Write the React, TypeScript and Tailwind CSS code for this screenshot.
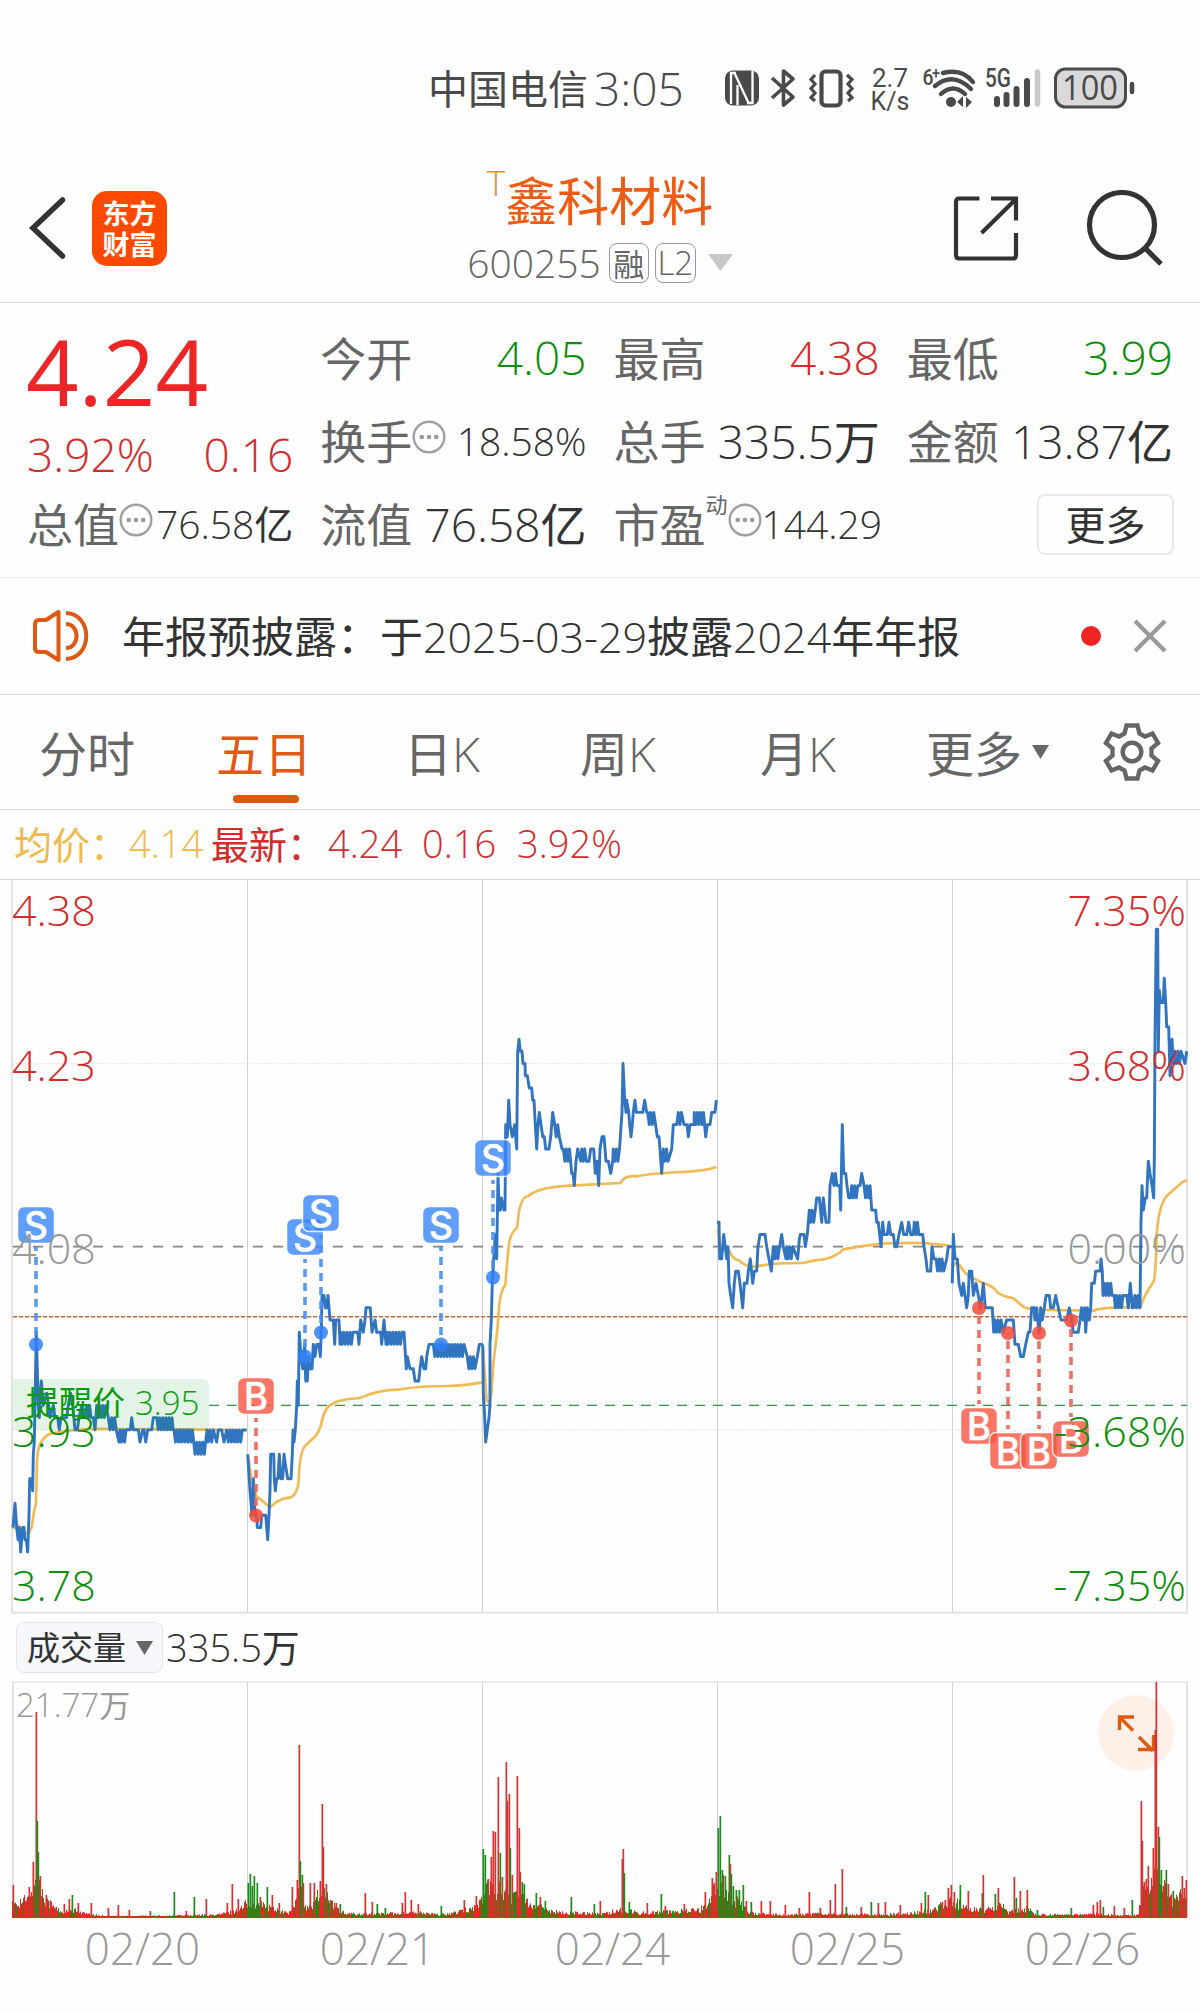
import React from "react";

const RED = "#d42c2c";
const GREEN = "#0d8f0d";

/* ---------- price series ---------- */

// [x, price] is a vertex, [x1, x2, a, b] a fast oscillation between two prices.
type Seg = [number, number] | [number, number, number, number];

const priceY = (p: number) => 366.7 - (p - 408) * 12.21;

function toPath(segs: Seg[], ox: number) {
  const pts: string[] = [];
  const push = (x: number, p: number) => pts.push(`${(ox + x / 3).toFixed(1)},${priceY(p).toFixed(1)}`);
  segs.forEach((s) => {
    if (s.length === 2) {
      push(s[0], s[1]);
      return;
    }
    let up = true;
    for (let x = s[0]; x <= s[1]; x += 4.6) {
      push(x, up ? s[2] : s[3]);
      up = !up;
    }
  });
  return "M" + pts.join("L");
}

const day1: Seg[] = [[39,385],[45,387],[50,385],[54,384],[58,385],[62,383],[68,385],[72,385],[75,384],[79,384],[83,383],[87,386],[89,389],[96,389],[98,388],[100,391],[103,392],[109,401],[115,395],[118,394],[121,396],[124,397],[127,396],[130,395],[140,396],[146,395],[150,394],[160,395],[165,394],[173,394],[178,393],[183,394],[200,394],[205,395],[212,396],[218,395],[225,393],[232,393],[237,394],[245,395],[250,394],[255,275,394,395],[280,394],[285,393],[290,320,395,394],[325,394],[330,393],[335,350,394,393],[357,392],[360,382,393,392],[385,393],[391,393],[395,394],[400,393],[415,393],[420,392],[428,393],[432,393],[437,392],[443,393],[455,393],[460,394],[468,394],[470,517,394,393],[520,393],[522,580,393,392],[585,391],[590,617,392,391],[621,393],[625,392],[630,393],[635,392],[640,393],[650,392],[655,393],[665,393],[672,392],[680,393],[685,392],[690,730,393,392],[735,393],[740,393]];
const day2: Seg[] = [[743,391],[750,388],[753,387],[756,386],[760,389],[763,387],[766,386],[770,386],[772,385],[782,385],[785,386],[797,386],[800,385],[803,384],[807,386],[810,388],[812,391],[821,391],[823,389],[826,388],[830,389],[834,389],[838,391],[843,389],[848,389],[852,391],[857,390],[863,389],[873,389],[877,391],[879,393],[882,392],[886,393],[890,395],[892,397],[895,395],[898,401],[903,399],[908,398],[914,400],[917,397],[922,397],[926,399],[930,398],[936,398],[940,400],[945,399],[950,400],[957,400],[961,399],[964,401],[966,404],[972,404],[976,403],[980,403],[984,404],[990,402],[1000,402],[1004,400],[1007,402],[1017,402],[1020,400],[1022,1060,401,400],[1062,401],[1073,401],[1077,400],[1082,402],[1090,401],[1095,402],[1098,403],[1111,403],[1116,401],[1125,402],[1130,401],[1142,401],[1145,400],[1152,402],[1158,400],[1160,1208,401,400],[1212,401],[1219,398],[1222,399],[1230,398],[1240,398],[1245,397],[1256,397],[1260,398],[1265,399],[1272,398],[1277,398],[1280,399],[1287,400],[1298,400],[1300,1395,400,399],[1402,1425,399,398],[1432,399],[1438,400],[1448,400]];
const day3: Seg[] = [[98,400],[100,396],[104,394],[107,392],[112,393],[117,394],[120,395],[120,400],[124,402],[127,405],[131,407],[136,409],[140,407],[144,414],[147,411],[151,411],[154,412],[162,411],[165,411],[167,418],[172,417],[176,420],[180,418],[187,417],[194,418],[200,416],[203,424],[207,425],[211,424],[216,424],[219,423],[225,423],[226,422],[232,422],[238,421],[245,421],[248,420],[252,420],[256,418],[260,416],[264,418],[268,419],[273,418],[278,417],[283,417],[287,416],[297,416],[302,417],[308,419],[314,332,418,417],[336,416],[340,360,416,415],[365,414],[369,414],[373,413],[378,415],[383,416],[392,415],[395,412,416,415],[417,415],[422,416],[431,416],[436,414],[441,415],[446,413],[450,416],[456,417],[462,417],[468,415],[475,415],[482,414],[488,415],[490,513,416,415],[516,419],[519,423],[524,420],[528,419],[530,420],[536,419],[539,418],[543,417],[547,418],[550,560,419,420],[565,419],[578,419],[584,420],[590,419],[593,615,419,418],[622,417],[627,417],[630,416],[635,414],[640,416],[645,658,415,416],[665,416],[670,418],[680,418],[685,697,419,418],[702,418],[711,418],[715,417],[720,418],[732,418],[733,762,419,418],[767,417],[772,418],[780,418],[785,419],[795,419],[799,420]];
const day4: Seg[] = [[51,410],[57,410],[59,407],[65,407],[68,408],[71,409],[76,408],[80,407],[84,408],[87,405],[92,404],[98,403],[103,405],[107,406],[115,406],[120,405],[128,403],[133,405],[141,405],[145,406],[151,407],[158,405],[163,406],[170,406],[174,408],[180,409],[195,409],[200,408],[207,407],[214,406],[220,242,408,407],[245,409],[250,408],[258,407],[260,280,408,407],[293,407],[298,408.6],[301,409],[312,409],[316,408],[322,409],[328,411],[332,346,410,411],[350,412],[358,412],[365,410],[370,412],[378,410],[387,410],[390,413],[397,415,414,413],[419,413],[422,411],[427,418],[431,414],[437,414],[441,413],[446,412],[452,412],[455,475,413,412],[480,413],[485,414],[492,513,413,412],[515,411],[527,411],[530,410],[535,410],[543,408],[548,410],[552,409],[562,409],[567,410],[572,409],[580,409],[585,408],[590,408],[597,409],[605,410],[611,409],[620,409],[626,410],[632,409],[640,409],[643,660,410,409],[668,409],[672,408],[678,407],[682,406],[692,406],[696,408],[702,407],[708,735,407,406],[740,407],[745,408],[756,408]];
const day5: Seg[] = [[757,405],[760,409],[765,407],[772,407],[777,405],[785,404],[790,405],[795,404],[800,403],[805,404],[808,406],[815,406],[820,404],[828,405],[835,404],[842,403],[850,405],[856,403],[877,403],[881,401],[884,402],[885,905,402,401],[910,401],[920,402],[940,402],[945,400],[955,400],[962,399],[970,399],[977,400],[985,401],[990,401],[995,403],[1002,403],[1005,402],[1010,403],[1013,402],[1018,401],[1022,403],[1027,402],[1033,403],[1038,404],[1048,404],[1052,403],[1060,403],[1067,404],[1075,403],[1083,402],[1100,402],[1108,403],[1115,402],[1120,401],[1135,401],[1140,1155,402,403],[1157,401],[1162,403],[1168,402],[1172,403],[1175,405],[1183,405],[1187,406],[1200,406],[1203,407],[1207,406],[1209,1240,404,405],[1243,404],[1246,1272,403,404],[1280,404],[1285,403],[1291,405],[1297,403],[1300,1319,403,404],[1320,403],[1323,410],[1326,413],[1330,411],[1336,412],[1340,412],[1345,415],[1350,414],[1356,413],[1361,412],[1363,415],[1365,425],[1369,434],[1373,434],[1375,424],[1378,429],[1382,428],[1390,428],[1393,430],[1397,428],[1400,426],[1406,426],[1410,422],[1416,425],[1420,1446,423,424],[1455,423],[1460,424]];

const series = [toPath(day1, 0), toPath(day2, 0), toPath(day3, 450), toPath(day4, 700), toPath(day5, 700)];

const averages = [
  { at: "translate(0 240) scale(.33333)", d: "M37 1222L45 1224L52 1215L60 1222L75 1238L85 1242L95 1222L103 1170L108 1150L111 1020Q115 940 170 938Q230 925 330 927L560 928L740 931" },
  { at: "translate(0 240) scale(.33333)", d: "M745 1010L756 1085L770 1130L790 1145L810 1162L830 1145L850 1136L873 1132Q892 1122 896 1085Q898 1000 915 978L940 955Q960 935 965 905Q975 860 1000 850Q1020 838 1080 834Q1130 810 1200 808Q1260 798 1340 798Q1400 796 1447 787" },
  { at: "translate(450 120) scale(.33333)", d: "M99 1045L104 1120L110 1200L118 1210L124 1180L130 1090L142 990L148 910Q155 865 166 855Q172 780 176 740Q180 700 202 682Q207 590 235 588Q265 560 373 556L512 549Q522 525 560 529Q600 520 700 516Q770 512 799 501" },
  { at: "translate(700 200) scale(.33333)", d: "M53 450L62 505L75 500L88 512Q98 538 118 542Q135 560 165 560Q220 548 310 549Q340 540 370 538Q410 530 430 508Q500 495 560 490Q670 486 700 492Q740 494 756 500" },
  { at: "translate(700 200) scale(.33333)", d: "M758 560L768 548L780 556Q795 585 820 595L850 610Q880 618 890 635Q905 648 940 655Q955 668 972 682Q990 690 1040 690L1180 692Q1200 684 1250 683L1322 680Q1330 650 1362 602Q1368 570 1370 465Q1375 380 1400 348Q1425 325 1445 308L1460 300" },
];

type Mark = { kind: "S" | "B"; x: number; y: number; dot: number };
const marks: Mark[] = [
  { kind: "S", x: 36, y: 345, dot: 464.5 },
  { kind: "S", x: 305, y: 357, dot: 476.5 },
  { kind: "S", x: 321, y: 333, dot: 452.5 },
  { kind: "S", x: 441, y: 345, dot: 464.5 },
  { kind: "S", x: 493, y: 278, dot: 397.5 },
  { kind: "B", x: 256, y: 516, dot: 635.5 },
  { kind: "B", x: 979, y: 546, dot: 428 },
  { kind: "B", x: 1008, y: 571, dot: 453 },
  { kind: "B", x: 1039, y: 571, dot: 453 },
  { kind: "B", x: 1071, y: 559, dot: 440.5 },
];

function TradeMark({ kind, x, y, dot }: Mark) {
  const fill = kind === "S" ? "#3a87fb" : "#fa5542";
  const dir = dot > y ? 1 : -1;
  return (
    <g>
      <path d={`M${x} ${y + dir * 22}V${dot}`} stroke={kind === "S" ? "#4a8fee" : "#ee6052"} strokeWidth="3.6" strokeDasharray="8 6" strokeDashoffset="4" opacity=".9" />
      <circle cx={x} cy={dot} r="7" fill={kind === "S" ? "#2f80f7" : "#f24a3a"} opacity=".85" />
      <rect x={x - 18.5} y={y - 18.5} width="37" height="37" rx="6.5" fill={fill} opacity=".8" stroke="#fff" strokeWidth="1.5" />
      <text x={x} y={y + 13.5} textAnchor="middle" fontSize="38" fontWeight="500" fill="#fff" stroke="#fff" strokeWidth=".5" textLength={24} lengthAdjust="spacingAndGlyphs" className="font-['Inter']">{kind}</text>
    </g>
  );
}

const axis: [string, string, number, string][] = [
  ["4.38", "7.35%", 30.5, RED],
  ["4.23", "3.68%", 185.5, RED],
  ["4.08", "0.00%", 368, "#999999"],
  ["3.93", "-3.68%", 551.5, GREEN],
  ["3.78", "-7.35%", 705.5, GREEN],
];

const columns = [247.5, 482.5, 717.5, 952.5];

function PriceChart() {
  return (
    <svg width="1200" height="734" viewBox="0 0 1200 734" fill="none" className="block shrink-0">
      <path d="M12 0V733M1187 0V733M12 732.7H1188" stroke="#e3e3e3" strokeWidth="2" />
      {columns.map((x) => <path key={x} d={`M${x} 0V732`} stroke="#d2d2d2" />)}
      <path d="M13 183.7H1187M13 550H1187" stroke="#dedede" strokeDasharray="1.5 1.5" />
      <path d="M13 366.7H1187" stroke="#858585" strokeWidth="1.8" strokeDasharray="10 10" />
      <path d="M13 436.7H1187" stroke="#bf6a3c" strokeWidth="1.4" strokeDasharray="4.2 1.8" />
      <path d="M209 525.4H1187" stroke="#3c9140" strokeWidth="1.3" strokeDasharray="10 8" />
      {averages.map((a, i) => <path key={i} d={a.d} transform={a.at} stroke="#f0ba54" strokeWidth="8" strokeLinejoin="round" />)}
      {series.map((d, i) => <path key={i} d={d} stroke="#3174c0" strokeWidth="2.9" strokeLinejoin="round" />)}
      {marks.map((m, i) => <TradeMark key={i} {...m} />)}
      <path d="M13 499H203Q209 499 209 505V544Q209 550 203 550H13Z" fill="#0c9c18" opacity=".11" />
      <text x="26" y="535" fontSize="33" fill="#099a10" className="font-['Noto_Sans_CJK_SC'] font-normal tracking-normal">提醒价</text>
      <text x="135" y="535" fontSize="33" fill="#0f9a14" className="font-['Open_Sans'] font-light tracking-normal">3.95</text>
      {axis.map(([price, pct, y, color]) => (
        <g key={price} fill={color} fontSize="43" className="font-['Open_Sans'] font-light tracking-normal">
          <text x="12" y={y + 15.5}>{price}</text>
          <text x="1186" y={y + 15.5} textAnchor="end">{pct}</text>
        </g>
      ))}
    </svg>
  );
}

/* ---------- volume ---------- */

const R = 0, G = 1, M = 2;
const barColor = ["#e82424", "#12900f", "#7c5c10"];

// Base level of the bars: [x, height].
const envelope: [number, number][] = [[12,14],[20,16],[28,18],[32,34],[37,36],[41,26],[46,18],[55,9],[62,6],[75,7],[90,3],[110,2],[160,2],[215,3],[232,6],[242,10],[248,18],[260,13],[275,9],[285,5],[292,6],[299,28],[305,12],[312,13],[322,28],[330,14],[345,4],[380,4],[420,5],[440,3],[460,6],[478,12],[486,30],[495,30],[505,24],[515,20],[522,26],[530,14],[545,9],[560,5],[585,5],[600,4],[622,8],[640,5],[670,6],[700,8],[712,22],[720,38],[728,22],[738,15],[750,5],[780,3],[820,4],[880,3],[915,5],[935,8],[950,18],[960,13],[970,8],[985,8],[1000,13],[1008,6],[1028,9],[1035,3],[1075,3],[1095,4],[1120,2],[1138,3],[1142,30],[1149,20],[1154,50],[1160,34],[1170,17],[1187,24]];

// Individual peaks: [x, height, colour].
const peaks: [number, number, number][] = [
  [13,33,R],[29,31,R],[33,56,R],[36,206,R],[37,97,G],[38,66,G],[40,42,R],[46,23,R],[50,17,R],[56,11,R],[64,14,R],[69,19,R],[72,23,G],[78,15,R],[91,15,R],[108,10,R],[118,13,R],[129,8,R],[150,7,R],[174,26,G],[186,7,R],[194,21,G],[206,19,R],[227,15,R],[232,34,R],[238,19,R],
  [248,35,G],[250,44,G],[252,32,G],[254,42,G],[257,35,G],[260,21,R],[267,31,G],[272,23,R],[279,15,R],[292,31,R],[297,38,R],[299,173,R],[300,57,G],[302,43,G],[303,35,R],[310,35,R],[314,35,R],[320,37,R],[322,114,R],[323,71,R],[326,34,R],[330,18,R],[336,15,R],[340,14,G],[365,25,R],[372,16,R],[377,14,G],[385,10,G],[402,15,R],[405,26,R],[411,18,R],[418,14,R],[441,12,G],[464,18,R],[476,22,R],
  [483,69,G],[485,63,G],[488,39,R],[491,61,R],[493,87,R],[495,86,R],[498,141,R],[500,65,G],[502,41,R],[506,156,R],[507,117,R],[509,124,R],[510,70,G],[512,43,R],[517,142,R],[519,90,R],[520,46,R],[522,36,G],[524,34,G],[536,25,G],[540,21,R],[545,17,G],[571,21,G],[594,14,G],[600,17,R],[622,59,R],[623,69,R],[624,45,G],[629,16,G],[647,15,R],[661,24,G],[665,12,R],[684,14,R],[705,26,R],[712,40,R],[714,35,R],[716,46,R],
  [718,90,G],[720,102,G],[722,48,G],[725,42,G],[729,63,G],[730,54,R],[731,44,G],[733,32,G],[736,28,G],[739,28,G],[743,33,G],[746,17,R],[751,16,G],[761,17,R],[770,17,R],[785,13,R],[799,10,R],[809,26,R],[820,10,R],[830,18,R],[835,34,R],[842,49,R],[846,11,G],[861,11,R],[871,16,G],[878,15,R],[885,16,R],[900,13,R],[921,15,R],[925,26,G],[928,23,R],[942,16,R],[945,18,R],[948,30,R],[951,33,R],
  [954,26,R],[960,33,G],[968,27,R],[982,25,G],[983,43,R],[995,24,G],[998,30,R],[1014,41,R],[1016,20,G],[1020,27,R],[1027,28,R],[1037,8,G],[1071,10,G],[1093,13,R],[1097,16,R],[1100,18,R],[1103,11,G],[1114,12,R],[1124,10,R],[1132,18,G],[1141,117,R],[1142,77,R],[1144,36,R],[1146,39,R],[1148,52,R],[1150,25,G],[1153,70,R],[1155,188,R],[1156,236,R],[1158,91,R],[1159,81,G],[1161,48,G],[1163,32,R],[1166,48,G],[1168,34,R],[1173,27,G],[1180,26,R],[1182,42,R],[1184,30,R],[1186,38,R],
];

function baseHeight(x: number) {
  const i = envelope.findIndex(([ex]) => ex > x);
  if (i <= 0) return envelope[envelope.length - 1][1];
  const [x0, h0] = envelope[i - 1];
  const [x1, h1] = envelope[i];
  return h0 + ((h1 - h0) * (x - x0)) / (x1 - x0);
}

const noise = (n: number) => {
  const v = Math.sin(n * 127.1) * 43758.5453;
  return v - Math.floor(v);
};

const baseBars = Array.from({ length: 1175 }, (_, i) => {
  const x = 12 + i;
  const c = noise(Math.floor(i / 2) + 900);
  return { x, h: Math.max(2, baseHeight(x) * (0.6 + 0.8 * noise(i + 3))), color: c < 0.48 ? R : c < 0.6 ? G : M };
});

function VolumeChart() {
  return (
    <svg width="1200" height="238" viewBox="0 0 1200 238" fill="none" className="block shrink-0">
      <path d="M12 1H1188" stroke="#dcdcdc" />
      <path d="M13 1V236M1187 1V236" stroke="#e3e3e3" strokeWidth="2" />
      {columns.map((x) => <path key={x} d={`M${x} 1V236`} stroke="#d2d2d2" />)}
      <circle cx="1136" cy="52" r="38" fill="#fef0e8" />
      <path d="M1119.5 49V36H1134M1119.5 36L1133 49.5M1139 56L1153 70M1138 68.5H1153.5V54" stroke="#df5a14" strokeWidth="3.4" />
      <text x="16" y="36" fontSize="33" fill="#999" className="font-['Open_Sans'] font-light tracking-normal">21.77<tspan fontSize="31" className="font-['Noto_Sans_CJK_SC'] font-normal">万</tspan></text>
      {baseBars.map((b) => <rect key={b.x} x={b.x} y={237 - b.h} width="1" height={b.h} fill={barColor[b.color]} />)}
      {peaks.map(([x, h, c], i) => <rect key={i} x={x - 0.5} y={237 - h} width="1.7" height={h} fill={c === R ? "#d93030" : "#1c8c18"} />)}
      <path d="M12 236.5H1187" stroke="#c93a20" />
    </svg>
  );
}

/* ---------- icons ---------- */

const Dots = () => (
  <svg width="34" height="36" viewBox="0 0 34 36" className="mb-[6px] shrink-0" fill="none">
    <circle cx="17" cy="18" r="15.3" stroke="#a0a0a0" strokeWidth="2.4" />
    <circle cx="9.8" cy="18" r="2.3" fill="#999" /><circle cx="17" cy="18" r="2.3" fill="#999" /><circle cx="24.2" cy="18" r="2.3" fill="#999" />
  </svg>
);

function StatusIcons() {
  return (
    <svg width="416" height="60" viewBox="720 58 416 60" fill="none" className="shrink-0 text-[#4a4a4a]">
      <g stroke="currentColor">
        <rect x="725" y="70.500" width="34" height="35" rx="8" fill="currentColor" stroke="none" />
        <path d="M731 104V73L736 73M752.500 71V103H747M734.500 73L749 104M737.500 85V105" stroke="#fff" strokeWidth="2.300" />
        <path d="M772 78L793 97L783.500 105V71L793 79L772 98" strokeWidth="3.600" strokeLinejoin="round" />
        <rect x="821.500" y="71.500" width="19" height="34" rx="4" strokeWidth="4.200" />
        <path d="M815 75L811 79.500L815 84L811 88.500L815 93L811 97.500L815 101M847 75L852 79.500L848 84L852 88.500L848 93L852 97.500L848 101" strokeWidth="3.200" />
        <path d="M943 73Q962 68 973 82M935 86Q953 71 971 89M941 94Q953 83 965 94" strokeWidth="4.400" strokeLinecap="round" />
        <circle cx="951" cy="102" r="5" fill="currentColor" stroke="none" />
        <path d="M957 102L963 96V107ZM966 97V108L972 102Z" fill="currentColor" stroke="none" />
        <path d="M997 99V104M1006.500 95V104M1016.500 89V104M1027 81V104" strokeWidth="6" strokeLinecap="round" />
        <path d="M1037.500 72V104" stroke="#c9c9c9" strokeWidth="5.500" strokeLinecap="round" />
        <rect x="1055.500" y="69" width="70" height="38" rx="10" fill="#d9d9d9" strokeWidth="3" />
        <path d="M1132 84V92" strokeWidth="4.500" strokeLinecap="round" />
      </g>
      <g fill="currentColor" className="font-['Roboto'] font-normal tracking-normal" textAnchor="middle">
        <text x="890" y="87" fontSize="26">2.7</text>
        <text x="890" y="109.500" fontSize="25">K/s</text>
        <text x="928" y="85" fontSize="22" fontWeight="500" textLength="11" lengthAdjust="spacingAndGlyphs">6</text>
        <text x="936" y="79" fontSize="16" fontWeight="500" textLength="8" lengthAdjust="spacingAndGlyphs">+</text>
        <text x="998" y="87" fontSize="25" fontWeight="500" textLength="26" lengthAdjust="spacingAndGlyphs">5G</text>
        <text x="1090" y="100" fontSize="35" className="font-['Open_Sans']" textLength="56" lengthAdjust="spacingAndGlyphs">100</text>
      </g>
    </svg>
  );
}

function Gear() {
  return (
    <svg width="58" height="60" viewBox="-29 -30 58 60" fill="none" stroke="#666" strokeWidth="4.4" className="shrink-0">
      <path d="M-5.500 -26.500H5.500L7.500 -18.500L13 -15.500L20.500 -18.500L26 -9L19.500 -3.500V3.500L26 9L20.500 18.500L13 15.500L7.500 18.500L5.500 26.500H-5.500L-7.500 18.500L-13 15.500L-20.500 18.500L-26 9L-19.500 3.500V-3.500L-26 -9L-20.500 -18.500L-13 -15.500L-7.500 -18.500Z" strokeLinejoin="miter" />
      <circle r="9.300" />
    </svg>
  );
}

/* ---------- page ---------- */

// Chinese runs are set in regular weight, digits and Latin letters in light.
function Mixed({ children }: { children: string }) {
  return (
    <>
      {children.split(/([\u4e00-\u9fff\uff00-\uffef]+)/).filter(Boolean).map((run, i) =>
        /[\u4e00-\uffef]/.test(run) ? <span key={i} className="font-['Noto_Sans_CJK_SC'] font-normal tracking-normal">{run}</span> : run
      )}
    </>
  );
}

function Stat({ label, value, tone = "text-[#333]", small = false, dots = false, sup }: { label: string; value: string; tone?: string; small?: boolean; dots?: boolean; sup?: string }) {
  return (
    <div className="flex items-center whitespace-nowrap pb-[3px]">
      <span className="text-[#666]"><Mixed>{label}</Mixed></span>
      {sup && <span className="mb-[40px] text-[22px] text-[#666]"><Mixed>{sup}</Mixed></span>}
      {dots && <Dots />}
      <span className={`ml-auto ${tone} ${small ? "text-[39px]" : "text-[46px]"}`}><Mixed>{value}</Mixed></span>
    </div>
  );
}

export default function App() {
  return (
    <div className="flex h-[2013px] w-[1200px] flex-col overflow-hidden bg-[#fefefe] font-['Open_Sans','Noto_Sans_CJK_SC',sans-serif] font-light leading-none tracking-normal [font-stretch:94%] [font-variation-settings:'wdth'_94]">
      <div className="flex h-[112px] shrink-0 items-center pl-[428px] pt-[64px] text-[#4a4a4a]">
        <span className="w-[166px] text-[40px]"><Mixed>中国电信</Mixed></span>
        <span className="w-[126px] text-[46px]">3:05</span>
        <StatusIcons />
      </div>

      <header className="grid h-[191px] shrink-0 grid-cols-[440px_1fr_440px] items-center border-b border-[#d6d6d6] pt-[42px]">
        <div className="flex items-center pl-[28px]">
          <svg width="40" height="64" viewBox="0 0 40 64" fill="none"><path d="M34.500 4L5 32L34.500 60" stroke="#333" strokeWidth="5.500" strokeLinecap="round" /></svg>
          <div className="ml-[24px] flex size-[75px] flex-col items-center justify-center rounded-[15px] bg-[#ff4800] font-['Noto_Sans_CJK_SC'] text-[27px] font-bold leading-[31px] tracking-normal text-white">
            <span>东方</span><span>财富</span>
          </div>
        </div>
        <div className="-mt-[4px] flex flex-col items-center">
          <div className="flex h-[68px] items-center text-[#ef5b12]">
            <span className="mb-[34px] text-[35px] text-[#e0912f]">T</span>
            <span className="text-[52px]"><Mixed>鑫科材料</Mixed></span>
          </div>
          <div className="mt-[5px] flex h-[48px] items-center text-[39px] text-[#666]">
            <span>600255</span>
            <span className="ml-[8px] flex h-[40px] w-[40px] items-center justify-center rounded-[8px] border border-[#999] text-[31px]"><Mixed>融</Mixed></span>
            <span className="ml-[6px] flex h-[40px] w-[41px] items-center justify-center rounded-[8px] border border-[#999] text-[33px]">L2</span>
            <svg width="25" height="17" viewBox="0 0 25 17" className="ml-[12px]"><path d="M0 0H25L12.500 17Z" fill="#c8c8c8" /></svg>
          </div>
        </div>
        <svg width="216" height="76" viewBox="950 190 216 76" fill="none" stroke="#333" className="ml-[190px]">
          <path d="M979.500 198.500H959Q956 198.500 956 202V255Q956 258.500 959 258.500H1013Q1016 258.500 1016 255V233M991 198.500H1016V220.500M1015 200L981.500 233" strokeWidth="4.200" />
          <circle cx="1122" cy="225" r="32.500" strokeWidth="5.200" /><path d="M1144.500 247.500L1161 264" strokeWidth="5.200" />
        </svg>
      </header>

      <section className="grid h-[275px] shrink-0 grid-cols-4 grid-rows-[83px_83px_83px] gap-x-[27px] border-b border-[#ececec] pl-[27px] pr-[27px] pt-[14px] text-[46px]">
        <div className="row-span-2 flex flex-col text-[#ec2626]">
          <span className="-ml-px mt-[8px] text-[92px] font-medium">4.24</span>
          <div className="mt-[14px] flex justify-between text-[46px] text-[#d42c2c]"><span>3.92%</span><span>0.16</span></div>
        </div>
        <Stat label="今开" value="4.05" tone="text-[#0d8f0d]" />
        <Stat label="最高" value="4.38" tone="text-[#d42c2c]" />
        <Stat label="最低" value="3.99" tone="text-[#0d8f0d]" />
        <Stat label="换手" value="18.58%" dots small />
        <Stat label="总手" value="335.5万" />
        <Stat label="金额" value="13.87亿" />
        <Stat label="总值" value="76.58亿" dots small />
        <Stat label="流值" value="76.58亿" />
        <Stat label="市盈" sup="动" value="144.29" dots small />
        <div className="flex items-center justify-end">
          <button className="-mr-px flex h-[61px] w-[137px] items-center justify-center rounded-[8px] border-2 border-[#e8e8e8] pb-[4px] text-[40px] text-[#333]"><Mixed>更多</Mixed></button>
        </div>
      </section>

      <div className="flex h-[117px] shrink-0 items-center border-b border-[#d6d6d6] pl-[31px] text-[#333]">
        <svg width="60" height="58" viewBox="0 0 60 58" fill="none" stroke="#dc5a14" strokeWidth="4">
          <path d="M15 13H8Q4 13 4 18V41Q4 45 8 45H15L27.500 53V5L15 13Z" strokeLinejoin="round" />
          <path d="M35 6C62 7 62 51 35 52M35 17C49 17 49 41 35 41" />
        </svg>
        <span className="ml-[31px] whitespace-nowrap pb-[2px] text-[43px]"><Mixed>年报预披露：于2025-03-29披露2024年年报</Mixed></span>
        <span className="ml-auto mr-[32px] size-[20px] rounded-full bg-[#ee2424]" />
        <svg width="34" height="34" viewBox="0 0 34 34" fill="none" className="mr-[33px]"><path d="M2 2L32 32M32 2L2 32" stroke="#999" strokeWidth="4" /></svg>
      </div>

      <nav className="flex h-[115px] shrink-0 items-center border-b border-[#d6d6d6] pl-[39px] text-[48px] text-[#666]">
        <span className="w-[177px]"><Mixed>分时</Mixed></span>
        <span className="relative w-[188px] text-[#df5a14]"><Mixed>五日</Mixed>
          <span className="absolute -bottom-[25px] left-[17px] h-[8px] w-[66px] rounded-full bg-[#e0560c]" />
        </span>
        <span className="w-[176px]"><Mixed>日K</Mixed></span>
        <span className="w-[180px]"><Mixed>周K</Mixed></span>
        <span className="w-[166px]"><Mixed>月K</Mixed></span>
        <span><Mixed>更多</Mixed></span>
        <svg width="17" height="14" viewBox="0 0 17 14" className="ml-[10px]"><path d="M0 0H17L8.500 14Z" fill="#666" /></svg>
        <div className="ml-auto mr-[39px]"><Gear /></div>
      </nav>

      <div className="flex h-[70px] shrink-0 items-center border-b border-[#d6d6d6] pb-[3px] pl-[14px] text-[38px] text-[#d42c2c]">
        <span className="w-[115px] whitespace-nowrap text-[#f0b94c]"><Mixed>均价：</Mixed></span>
        <span className="w-[82px] text-[#f0b94c]">4.14</span>
        <span className="w-[117px] whitespace-nowrap"><Mixed>最新：</Mixed></span>
        <span className="w-[94px]">4.24</span>
        <span className="w-[95px]">0.16</span>
        <span>3.92%</span>
      </div>

      <PriceChart />

      <div className="flex h-[67px] shrink-0 items-center pl-[16px] text-[#333]">
        <div className="flex h-[51px] w-[147px] items-center rounded-[8px] border border-[#e2e5e9] bg-[#f6f8fb] pb-[2px] pl-[10px] text-[33px]">
          <Mixed>成交量</Mixed>
          <svg width="17" height="14" viewBox="0 0 17 14" className="ml-[10px] mt-[2px]"><path d="M0 0H17L8.500 14Z" fill="#666" /></svg>
        </div>
        <span className="ml-[3px] pb-[3px] text-[38px]"><Mixed>335.5万</Mixed></span>
      </div>

      <VolumeChart />

      <div className="grid h-[60px] shrink-0 grid-cols-5 items-center pb-[2px] pl-[25px] text-center text-[44px] text-[#999]">
        <span>02/20</span><span>02/21</span><span>02/24</span><span>02/25</span><span>02/26</span>
      </div>
    </div>
  );
}
